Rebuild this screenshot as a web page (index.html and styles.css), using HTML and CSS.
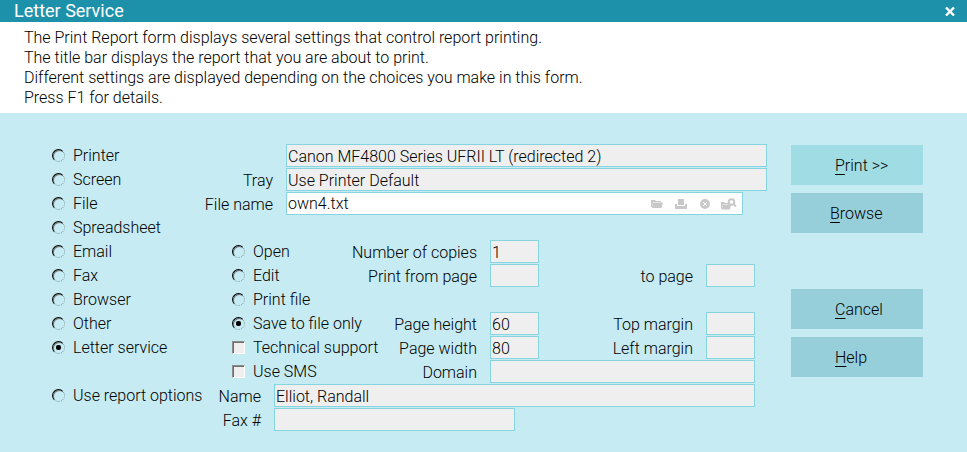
FILE: index.html
```html
<!DOCTYPE html>
<html lang="en">
<head>
  <meta charset="UTF-8" />
  <meta name="viewport" content="width=device-width, initial-scale=1.0" />
  <title>Letter Service</title>
  <link rel="stylesheet" href="styles.css">
</head>
<body>
  <header class="titlebar">
    <h1>Letter Service</h1>
    <button type="button" class="close" aria-label="Close">
      <svg width="10" height="9" viewBox="0 0 10 9"><path d="M1 .5 9 8.500M9 .5 1 8.500" stroke="#fff" stroke-width="2.400" fill="none"/></svg>
    </button>
  </header>

  <div class="intro">
    <p>The Print Report form displays several settings that control report printing.</p>
    <p>The title bar displays the report that you are about to print.</p>
    <p>Different settings are displayed depending on the choices you make in this form.</p>
    <p>Press F1 for details.</p>
  </div>

  <form class="report">
    <div class="fields">
      <!-- destination -->
      <label class="option dest r1"><input type="radio" name="dest">Printer</label>
      <label class="option dest r2"><input type="radio" name="dest">Screen</label>
      <label class="option dest r3"><input type="radio" name="dest">File</label>
      <label class="option dest r4"><input type="radio" name="dest">Spreadsheet</label>
      <label class="option dest r5"><input type="radio" name="dest">Email</label>
      <label class="option dest r6"><input type="radio" name="dest">Fax</label>
      <label class="option dest r7"><input type="radio" name="dest">Browser</label>
      <label class="option dest r8"><input type="radio" name="dest">Other</label>
      <label class="option dest r9"><input type="radio" name="dest" checked>Letter service</label>
      <label class="option dest r11"><input type="radio" name="dest">Use report options</label>

      <!-- printer and file -->
      <input class="field wide r1" type="text" aria-label="Printer name" value="Canon MF4800 Series UFRII LT (redirected 2)" readonly>
      <label class="caption cap-file r2" for="tray">Tray</label>
      <input class="field wide r2" type="text" id="tray" value="Use Printer Default" readonly>
      <label class="caption cap-file r3" for="filename">File name</label>
      <div class="field file-box r3">
        <input type="text" id="filename" value="own4.txt">
        <button type="button" aria-label="Open folder">
          <svg width="12" height="10" viewBox="0 0 12 10"><path d="M0 8V1h4l1 1h5v1H2L1 8z"/><path d="M2 3.500h10L10.500 9H1z"/></svg>
        </button>
        <button type="button" aria-label="Print file">
          <svg width="12" height="12" viewBox="0 0 12 12"><path d="M3 1h6v6H3z"/><path d="M0 6h2v2h8V6h2v5H0z"/></svg>
        </button>
        <button type="button" aria-label="Clear">
          <svg width="10" height="10" viewBox="0 0 10 10"><circle cx="5" cy="5" r="5"/><path d="m3 3 4 4M7 3 3 7" stroke="#fff"/></svg>
        </button>
        <button type="button" aria-label="Find file">
          <svg width="16" height="12" viewBox="0 0 16 12"><path d="M0 11V4h3l1 1h5v1H2L1 11z"/><path d="M2 6.500h8L9 11.500H1z"/><circle cx="10.500" cy="4" r="2.800" fill="#fff" stroke="#c8c8c8" stroke-width="2"/><path d="m12.500 6 2.500 2.500" stroke="#c8c8c8" stroke-width="2"/></svg>
        </button>
      </div>

      <!-- what to do with the file -->
      <label class="option action r5"><input type="radio" name="action">Open</label>
      <label class="option action r6"><input type="radio" name="action">Edit</label>
      <label class="option action r7"><input type="radio" name="action">Print file</label>
      <label class="option action r8"><input type="radio" name="action" checked>Save to file only</label>
      <label class="option action r9"><input type="checkbox">Technical support</label>
      <label class="option action r10"><input type="checkbox">Use SMS</label>

      <!-- pages -->
      <label class="caption cap-page r5" for="copies">Number of copies</label>
      <input class="field page r5" type="text" id="copies" value="1" readonly>
      <label class="caption cap-page r6" for="from">Print from page</label>
      <input class="field page r6" type="text" id="from" readonly>
      <label class="caption cap-margin r6" for="to">to page</label>
      <input class="field margin r6" type="text" id="to" readonly>
      <label class="caption cap-page r8" for="height">Page height</label>
      <input class="field page r8" type="text" id="height" value="60" readonly>
      <label class="caption cap-margin r8" for="top">Top margin</label>
      <input class="field margin r8" type="text" id="top" readonly>
      <label class="caption cap-page r9" for="width">Page width</label>
      <input class="field page r9" type="text" id="width" value="80" readonly>
      <label class="caption cap-margin r9" for="left">Left margin</label>
      <input class="field margin r9" type="text" id="left" readonly>
      <label class="caption cap-page r10" for="domain">Domain</label>
      <input class="field domain r10" type="text" id="domain" readonly>

      <!-- recipient -->
      <label class="caption cap-name r11" for="name">Name</label>
      <input class="field name r11" type="text" id="name" value="Elliot, Randall" readonly>
      <label class="caption cap-name r12" for="fax">Fax #</label>
      <input class="field fax r12" type="text" id="fax" readonly>
    </div>

    <div class="buttons">
      <button type="submit" class="print"><u>P</u>rint &gt;&gt;</button>
      <button type="button" class="browse"><u>B</u>rowse</button>
      <button type="button" class="cancel"><u>C</u>ancel</button>
      <button type="button"><u>H</u>elp</button>
    </div>
  </form>
</body>
</html>
```

FILE: styles.css
```css
* {
  box-sizing: border-box;
}
body {
  margin: 0;
  min-height: 100vh;
  display: flex;
  flex-direction: column;
  background: #c6ebf3;
  color: #000;
  font-family: Roboto, "Liberation Sans", sans-serif;
  font-size: 16px;
  font-weight: 300;
  line-height: 20px;
}
input,
button {
  font: inherit;
  color: inherit;
}

.titlebar {
  display: flex;
  align-items: center;
  justify-content: space-between;
  height: 22px;
  padding: 0 12px 0 14px;
  background: #1e91aa;
  color: #fff;
}
.titlebar h1 {
  margin: 0;
  font-size: 18px;
  font-weight: 400;
}
.close {
  display: flex;
  padding: 0;
  border: 0;
  background: none;
}

.intro {
  padding: 6px 24px 5px;
  background: #fff;
}
.intro p {
  margin: 0;
}

.report {
  display: flex;
  gap: 25px;
  padding: 31px 44px 20px 46px;
}
.fields {
  flex: 1;
  display: grid;
  grid-template-columns: repeat(60, minmax(0, 1fr));
  grid-template-rows: repeat(12, 24px);
}

/* rows */
.r1 { grid-row: 1; }
.r2 { grid-row: 2; }
.r3 { grid-row: 3; }
.r4 { grid-row: 4; }
.r5 { grid-row: 5; }
.r6 { grid-row: 6; }
.r7 { grid-row: 7; }
.r8 { grid-row: 8; }
.r9 { grid-row: 9; }
.r10 { grid-row: 10; }
.r11 { grid-row: 11; }
.r12 { grid-row: 12; }

/* columns */
.dest { grid-column: 1 / 15; }
.action { grid-column: 16 / 29; }
.wide { grid-column: 21 / 61; }
.file-box { grid-column: 21 / 59; }
.page { grid-column: 38 / 42; }
.margin { grid-column: 56 / 60; }
.domain { grid-column: 38 / 60; }
.name { grid-column: 20 / 60; }
.fax { grid-column: 20 / 40; }
.cap-file { grid-column: 13 / 20; }
.cap-page { grid-column: 25 / 37; }
.cap-margin { grid-column: 46 / 55; }
.cap-name { grid-column: 14 / 19; }

.caption {
  padding: 3px 1px 0 0;
  text-align: right;
  white-space: nowrap;
}
.field {
  width: calc(100% + 1px);
  height: 23px;
  padding: 1px 1px 0;
  border: 1px solid #86d4e0;
  border-radius: 0;
  background: #efefef;
  outline: none;
}
.file-box {
  display: flex;
  background: #fff;
}
.file-box input {
  flex: 1;
  min-width: 0;
  padding: 0;
  border: 0;
  background: none;
  outline: none;
}
.file-box button {
  display: flex;
  align-items: center;
  justify-content: center;
  width: 24px;
  padding: 0;
  border: 0;
  background: none;
}
.file-box svg {
  fill: #c8c8c8;
}

.option {
  display: flex;
  align-items: center;
  gap: 8px;
  height: 23px;
  padding-left: 6px;
  white-space: nowrap;
}
.option input {
  appearance: none;
  flex: none;
  display: grid;
  place-items: center;
  width: 13px;
  height: 13px;
  margin: 0;
}
.option input[type="radio"] {
  border: 1px dotted #7d8f94;
  border-top: 1px solid #000;
  border-left: 1px solid #000;
  border-radius: 50%;
  box-shadow: inset 1px 1px 0 #6c7a7e;
}
.option input[type="radio"]:checked::before {
  content: "";
  width: 5px;
  height: 5px;
  border-radius: 2px;
  background: #000;
}
.option input[type="checkbox"] {
  border: 1px solid;
  border-color: #8c8c8c #fff #fff #8c8c8c;
  background: #efefef;
  box-shadow: inset 1px 1px 0 #6e6e6e;
}

.buttons {
  display: flex;
  flex-direction: column;
  gap: 8px;
  width: 132px;
  padding-top: 1px;
}
.buttons button {
  height: 40px;
  padding: 1px 0 0 44px;
  border: 0;
  background: #96ced9;
  text-align: left;
}
.buttons u {
  text-underline-offset: 3px;
}
.buttons .print {
  background: #a0dce4;
}
.buttons .browse {
  padding-left: 39px;
}
.buttons .cancel {
  margin-top: 48px;
}
```
